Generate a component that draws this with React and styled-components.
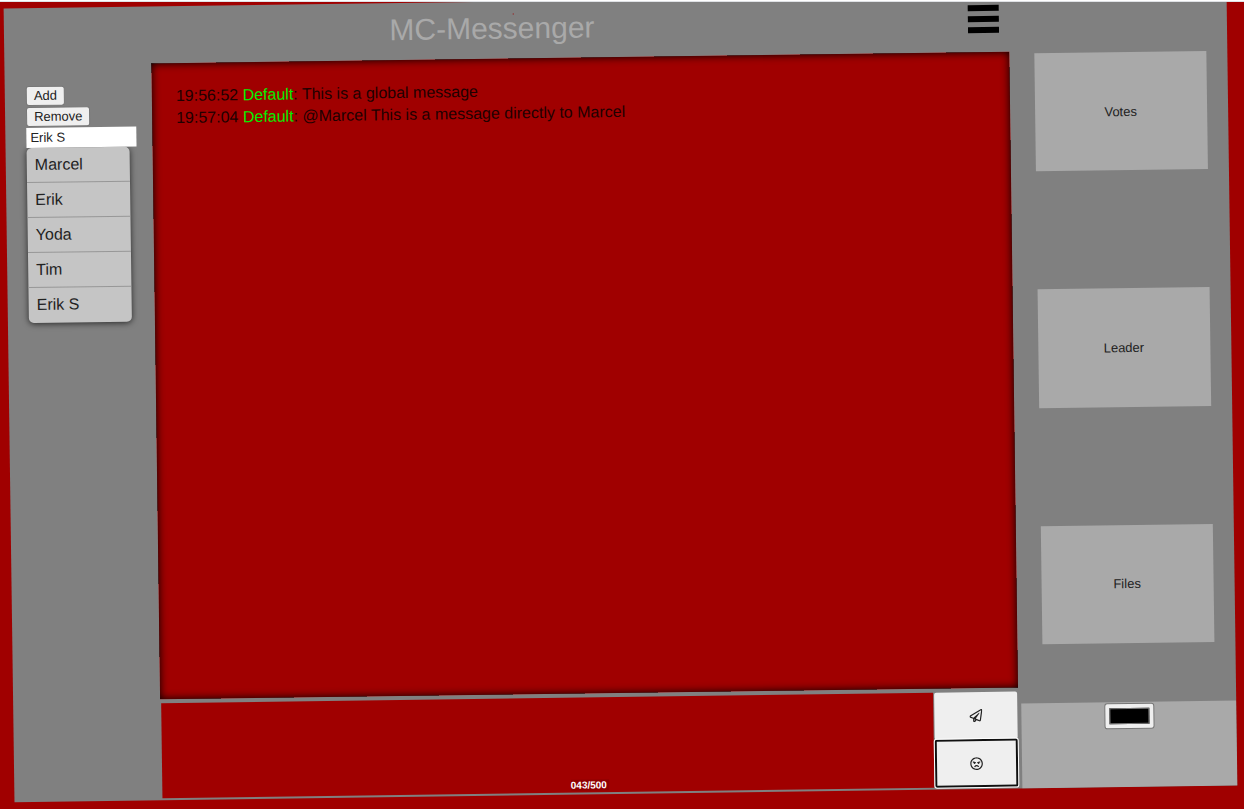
import React, { useState } from "react";
import styled, { createGlobalStyle } from "styled-components";
import { FaRegAngry, FaRegPaperPlane } from "react-icons/fa";

const GlobalStyle = createGlobalStyle`
  *, *::before, *::after { box-sizing: border-box; }
  body {
    margin: 0;
    background: #a00000;
    color: #000;
    font-family: "Liberation Sans", Arial, sans-serif;
    font-size: 16px;
  }
  button, input, textarea { font-family: inherit; font-size: 13px; }
`;

const Page = styled.div`
  min-height: 100vh;
  overflow: hidden;
`;

const TopStrip = styled.div`
  position: relative;
  z-index: 1;
  height: 2px;
  margin-bottom: -2px;
  background: #fff;
  border-bottom: 1px solid #dfe1e5;
`;

const Shell = styled.div`
  display: grid;
  grid-template-columns: 147px minmax(0, 1fr) 218px;
  grid-template-rows: 57px minmax(0, 1fr) 97px;
  height: calc(100vh - 15px);
  margin: 0 12px 0 9px;
  overflow: hidden;
  background: #808080;
  transform: rotate(-0.785deg);
`;

const Header = styled.header`
  position: relative;
  grid-column: 1 / 3;
  display: flex;
  align-items: center;
  padding: 0 10px 10px 12px;
`;

const Title = styled.h1`
  flex: 1;
  margin: 0;
  padding-top: 6px;
  color: #a9a9a9;
  font-size: 30px;
  font-weight: 400;
  line-height: 36px;
  text-align: center;
`;

const StatusDot = styled.span`
  position: absolute;
  top: 12px;
  left: 509px;
  width: 1px;
  height: 1px;
  background: #a00000;
`;

const MenuButton = styled.button`
  display: flex;
  flex-direction: column;
  gap: 5px;
  width: 31px;
  padding: 0;
  border: 0;
  background: none;
`;

const MenuBar = styled.span`
  height: 6px;
  background: #000;
`;

const Sidebar = styled.aside`
  grid-column: 1;
  grid-row: 2 / 4;
  padding: 21px 0 0 21px;
`;

const UserControls = styled.form`
  display: flex;
  flex-direction: column;
  align-items: flex-start;
  gap: 1px;
`;

const SmallButton = styled.button`
  height: 20px;
  padding: 0 7px;
  border: 1px solid #767676;
  border-radius: 3px;
  background: #efefef;
  color: #222;
  line-height: 16px;
`;

const NameInput = styled.input`
  width: 110px;
  height: 20px;
  padding: 0 4px 1px;
  border: 0;
  background: #fff;
  color: #222;
`;

const UserList = styled.ul`
  width: 103px;
  margin: 0;
  padding: 0;
  overflow: hidden;
  list-style: none;
  border-radius: 5px;
  background: #c5c5c5;
  box-shadow: 0 1px 6px rgba(0, 0, 0, 0.7);
`;

const UserItem = styled.li`
  height: 35px;
  padding: 0 8px;
  border-bottom: 1px solid #979797;
  color: #222;
  line-height: 34px;

  &:last-child { border-bottom: 0; }
`;

const ChatLog = styled.main`
  grid-column: 2;
  grid-row: 2;
  margin-bottom: 4px;
  padding: 22px 24px;
  background: #a00000;
  box-shadow: inset 0 0 9px #000;
`;

const Message = styled.p`
  margin: 0;
  color: #200000;
  line-height: 22px;
`;

const Sender = styled.span`
  color: #00f000;
`;

const Composer = styled.section`
  position: relative;
  grid-column: 2;
  grid-row: 3;
  display: grid;
  grid-template-columns: minmax(0, 1fr) 83px;
  gap: 1px;
  margin-right: 1px;
  padding: 0 0 2px 1px;
`;

const MessageBox = styled.textarea`
  width: 100%;
  height: 100%;
  padding: 8px;
  border: 0;
  outline: 0;
  resize: none;
  background: #a00000;
  color: #000;
`;

const Counter = styled.output`
  position: absolute;
  bottom: 4px;
  left: 50%;
  padding-right: 2px;
  background: rgba(0, 0, 0, 0.1);
  color: #fff;
  font-size: 10px;
  font-weight: 700;
  line-height: 11px;
  transform: translateX(-50%);
`;

const Actions = styled.div`
  display: grid;
  grid-template-rows: 47px 1fr;
`;

const ActionButton = styled.button`
  display: flex;
  align-items: center;
  justify-content: center;
  padding: 0;
  border: ${({ $active }) => ($active ? "2px solid #101010" : "0")};
  border-radius: 2px;
  outline: ${({ $active }) => ($active ? "1px solid #fff" : "0")};
  background: #efefef;
  color: #222;
`;

const RightPanel = styled.nav`
  grid-column: 3;
  grid-row: 1 / 4;
  display: flex;
  flex-direction: column;
  padding-left: 3px;
`;

const TileCell = styled.div`
  flex: 1;
  display: flex;
  align-items: center;
  justify-content: center;
`;

const TileButton = styled.button`
  width: 80%;
  height: 50%;
  border: 0;
  background: #a9a9a9;
  color: #222;
`;

const ColorPanel = styled.div`
  display: flex;
  align-items: flex-start;
  justify-content: center;
  height: 85px;
  padding-top: 1px;
  background: #a9a9a9;
`;

const ColorInput = styled.input`
  width: 50px;
  height: 26px;
  padding: 0;
  border: 1px solid #767676;
  border-radius: 3px;
  background: #efefef;

  &::-webkit-color-swatch-wrapper { padding: 4px; }
  &::-webkit-color-swatch { border: 1px solid #777; }
`;

const users = ["Marcel", "Erik", "Yoda", "Tim", "Erik S"];

const messages = [
  { time: "19:56:52", sender: "Default", text: "This is a global message" },
  { time: "19:57:04", sender: "Default", text: "@Marcel This is a message directly to Marcel" },
];

export default function App() {
  const [name, setName] = useState("Erik S");
  const [color, setColor] = useState("#000000");

  return (
    <>
      <GlobalStyle />
      <Page>
        <TopStrip />
        <Shell>
          <Header>
            <Title>MC-Messenger</Title>
            <StatusDot />
            <MenuButton type="button" aria-label="Menu">
              <MenuBar />
              <MenuBar />
              <MenuBar />
            </MenuButton>
          </Header>

          <Sidebar>
            <UserControls onSubmit={(event) => event.preventDefault()}>
              <SmallButton type="submit">Add</SmallButton>
              <SmallButton type="button">Remove</SmallButton>
              <NameInput
                aria-label="User name"
                value={name}
                onChange={(event) => setName(event.target.value)}
              />
            </UserControls>
            <UserList>
              {users.map((user) => (
                <UserItem key={user}>{user}</UserItem>
              ))}
            </UserList>
          </Sidebar>

          <ChatLog>
            {messages.map(({ time, sender, text }) => (
              <Message key={time}>
                {time} <Sender>{sender}</Sender>: {text}
              </Message>
            ))}
          </ChatLog>

          <Composer>
            <MessageBox id="message" aria-label="Message" />
            <Actions>
              <ActionButton type="button" aria-label="Send">
                <FaRegPaperPlane size={13} />
              </ActionButton>
              <ActionButton type="button" aria-label="Emoji" $active>
                <FaRegAngry size={13} />
              </ActionButton>
            </Actions>
            <Counter htmlFor="message">043/500</Counter>
          </Composer>

          <RightPanel>
            {["Votes", "Leader", "Files"].map((label) => (
              <TileCell key={label}>
                <TileButton type="button">{label}</TileButton>
              </TileCell>
            ))}
            <ColorPanel>
              <ColorInput
                type="color"
                aria-label="Text color"
                value={color}
                onChange={(event) => setColor(event.target.value)}
              />
            </ColorPanel>
          </RightPanel>
        </Shell>
      </Page>
    </>
  );
}
